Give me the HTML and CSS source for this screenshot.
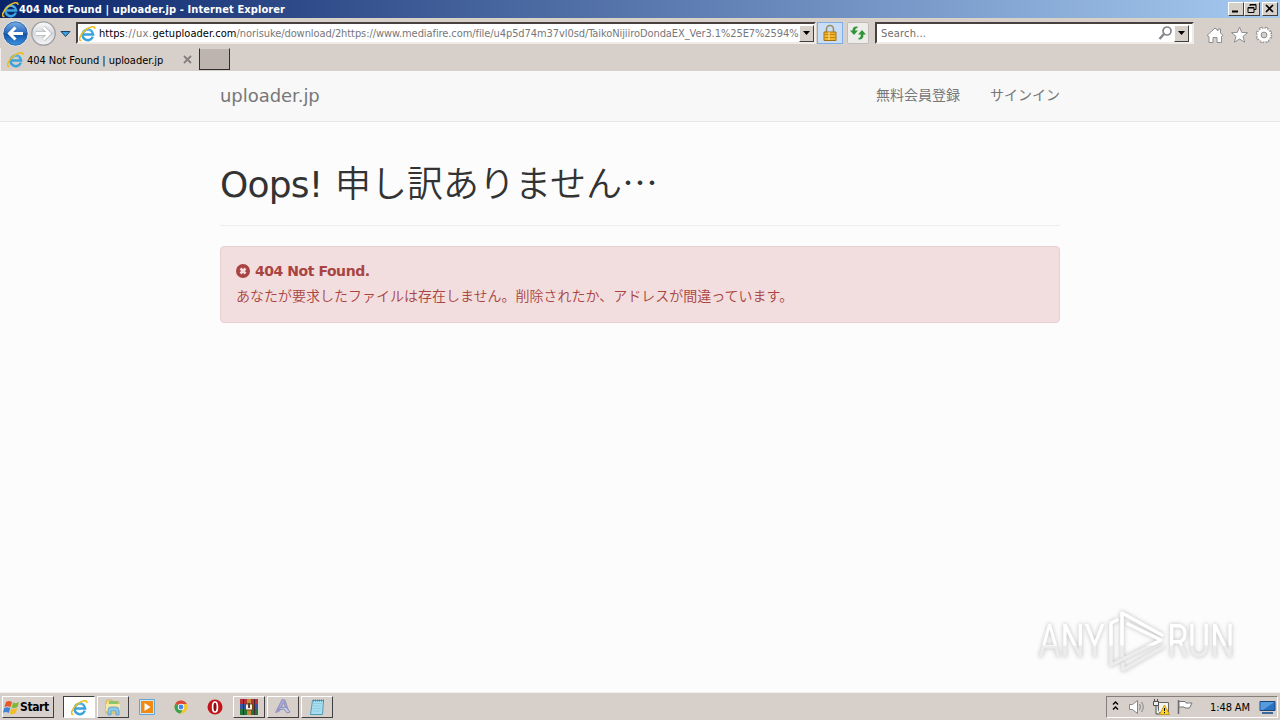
FILE: index.html
```
<!DOCTYPE html>
<html lang="ja">
<head>
  <meta charset="UTF-8">
  <title>404 Not Found | uploader.jp</title>
  <link rel="stylesheet" href="styles.css">
</head>
<body>
  <!-- Shared icons -->
  <svg class="defs" width="0" height="0">
    <defs>
      <linearGradient id="blue" x1="0" y1="0" x2="0" y2="1">
        <stop offset="0" stop-color="#7db4e8"/>
        <stop offset=".48" stop-color="#2a68bd"/>
        <stop offset=".52" stop-color="#1450a5"/>
        <stop offset="1" stop-color="#3d9be6"/>
      </linearGradient>
      <linearGradient id="silver" x1="0" y1="0" x2="0" y2="1">
        <stop offset="0" stop-color="#fafafa"/>
        <stop offset=".5" stop-color="#d6d8dc"/>
        <stop offset="1" stop-color="#f4f6f8"/>
      </linearGradient>
      <linearGradient id="mark" gradientUnits="userSpaceOnUse" x1="0" y1="0" x2="0" y2="76">
        <stop offset=".51" stop-color="#ffffff"/>
        <stop offset=".53" stop-color="#ececec"/>
      </linearGradient>
    </defs>
    <symbol id="ie" viewBox="0 0 16 16">
      <path d="M13 11A5 5 0 1 1 13.300 8.900H4.500" fill="none" stroke="#3aa3de" stroke-width="2.300"/>
      <path d="M4.500 6.200q3.500-3.400 7 0" fill="none" stroke="#8ed0f2" stroke-width=".8"/>
      <path d="M2.300 14.500C-1.200 15.200.800 9.200 6 4.900 10.300 1.300 15.300.300 14.900 3.600" fill="none" stroke="#e9bd22" stroke-width="1.500"/>
    </symbol>
  </svg>

  <!-- Title bar -->
  <div class="titlebar">
    <svg class="title-icon" width="17" height="17"><use href="#ie"/></svg>
    <span class="title">404 Not Found | uploader.jp - Internet Explorer</span>
    <div class="window-buttons">
      <div class="win-btn"><svg width="14" height="11"><path d="M3 8.500h6" stroke="#000" stroke-width="2"/></svg></div>
      <div class="win-btn"><svg width="14" height="11"><path d="M5 3V1.500h6v5H9M5 2h6M3 4.500h6v5H3zM3 5h6" fill="none" stroke="#000"/></svg></div>
      <div class="win-btn close"><svg width="14" height="11"><path d="M3 2l7 7M10 2L3 9" stroke="#000" stroke-width="1.700"/></svg></div>
    </div>
  </div>

  <!-- Address bar -->
  <div class="toolbar">
    <svg class="nav" width="76" height="29">
      <circle cx="43.500" cy="14.500" r="11.700" fill="url(#silver)" stroke="#9c9ea2" stroke-width="1.300"/>
      <circle cx="15.500" cy="14.500" r="12.500" fill="url(#blue)" stroke="#eef3f8" stroke-width="1"/>
      <circle cx="15.500" cy="14.500" r="11.700" fill="none" stroke="#2b5d9c" stroke-width=".8"/>
      <path d="M23 14.500H10M15.500 8.500L9.500 14.500l6 6" fill="none" stroke="#fff" stroke-width="3"/>
      <path d="M36 14.500h13M43.500 8.500l6 6-6 6" fill="none" stroke="#a7a9ad" stroke-width="4"/>
      <path d="M36 14.500h13M43.500 8.500l6 6-6 6" fill="none" stroke="#fff" stroke-width="2.800"/>
      <path d="M61 12.500h9l-4.500 5z" fill="#3d9fe0" stroke="#17446f"/>
    </svg>
    <div class="field address">
      <svg class="field-icon" width="17" height="17"><use href="#ie"/></svg>
      <div class="url"><b>https</b><span class="scheme">://ux.</span><b class="host">getuploader.com</b><span class="path">/norisuke/download/2https://www.mediafire.com/file/u4p5d74m37vl0sd/TaikoNijiiroDondaEX_Ver3.1%25E7%2594%</span></div>
      <div class="drop"><svg width="7" height="4"><path d="M0 0h7L3.500 4z"/></svg></div>
    </div>
    <div class="tool lock">
      <svg width="16" height="18">
        <path d="M4.500 9V5a3.500 3.500 0 0 1 7 0v4" fill="none" stroke="#9a8c62" stroke-width="1.600"/>
        <path d="M2 8h12v8.500H2z" fill="#f2b62c" stroke="#a4700e"/>
        <path d="M2.500 10.500h11M2.500 13.500h11" stroke="#c88411"/>
        <path d="M7 8v8" stroke="#ffe48a"/>
      </svg>
    </div>
    <div class="tool refresh">
      <svg width="18" height="18" fill="#2f9638">
        <path d="M8.500 2.500Q3.500 2 3.500 6.500H1L5 11l4-4.500H6.200Q6 4 8.500 4z"/>
        <path d="M9.500 15.500q5 .5 5-5H17L13 6 9 10.500h2.800q.2 3.300-2.300 3.500z"/>
      </svg>
    </div>
    <div class="field search">
      <span class="placeholder">Search...</span>
      <svg width="15" height="16" fill="none" stroke="#85858b"><circle cx="9" cy="6" r="4" stroke-width="1.700"/><path d="M6 9L1.500 14" stroke-width="2.400"/></svg>
      <div class="drop"><svg width="7" height="4"><path d="M0 0h7L3.500 4z"/></svg></div>
    </div>
    <svg class="commands" width="70" height="20" fill="#fff" stroke="#8e8e8e">
      <path d="M1 10.500L9 3l3 2.800V4h2.500v4L17 10.500l-1.500 1V17.500h-4.500v-5H7v5H3v-6z"/>
      <path d="M33.500 2l2.200 5.400 5.800.3-4.500 3.700 1.600 5.800-5.100-3.200-5.100 3.200 1.600-5.800-4.500-3.700 5.800-.3z"/>
      <circle cx="58" cy="10" r="6.500" stroke-width="3.600" stroke-dasharray="3.100 2.005"/>
      <circle cx="58" cy="10" r="5.600" stroke-width="1.600"/>
      <circle cx="58" cy="10" r="6.500" stroke="#fff" stroke-width="2" stroke-dasharray="1.500 3.605" stroke-dashoffset="-.8"/>
      <circle cx="58" cy="10" r="4.500" stroke="#fff" stroke-width="2"/>
      <circle cx="58" cy="10" r="2.900" fill="#d5cfca"/>
    </svg>
  </div>

  <!-- Tabs -->
  <div class="tabs">
    <div class="tab">
      <svg width="17" height="17"><use href="#ie"/></svg>
      <span class="tab-title">404 Not Found | uploader.jp</span>
      <svg class="tab-close" width="9" height="9"><path d="M1 1l7 7M8 1L1 8" stroke="#85807c" stroke-width="1.800"/></svg>
    </div>
    <div class="new-tab"></div>
  </div>

  <!-- Page -->
  <div class="page">
    <div class="navbar">
      <div class="container nav-inner">
        <a class="brand">uploader.jp</a>
        <div class="nav-links">
          <a>無料会員登録</a>
          <a>サインイン</a>
        </div>
      </div>
    </div>
    <div class="container">
      <h1><span class="oops">Oops! </span>申し訳ありません…</h1>
      <div class="alert">
        <div class="alert-title">
          <svg width="14" height="14"><circle cx="7" cy="7" r="7" fill="#a94442"/><path d="M4.500 4.500l5 5M9.500 4.500l-5 5" stroke="#f2dede" stroke-width="2.600"/></svg>
          <strong>404 Not Found.</strong>
        </div>
        <p>あなたが要求したファイルは存在しません。削除されたか、アドレスが間違っています。</p>
      </div>
    </div>
    <svg class="watermark" width="240" height="76" fill="url(#mark)">
      <g transform="scale(.74 1)" font-size="46">
        <text x="10" y="51">ANY</text>
        <text x="184" y="51">RUN</text>
      </g>
      <g fill="none" stroke="url(#mark)" stroke-width="3.600" stroke-linejoin="round" stroke-linecap="round">
        <path d="M91 50V7l40 22"/>
        <path d="M86 14l-6 3v42l50-25-33-16"/>
        <path d="M92 58v6l40-23"/>
      </g>
    </svg>
  </div>

  <!-- Taskbar -->
  <div class="taskbar">
    <div class="start">
      <svg width="17" height="17">
        <path d="M3 3q3-2 6 0L7.500 8q-3-1.500-6 0z" fill="#e8562a"/>
        <path d="M10 3.500q3 1.500 6-.5L14.500 8q-3 2-6 .5z" fill="#7db83a"/>
        <path d="M1.300 9q3-1.500 6 0L5.800 14q-3-2-6 0z" fill="#3f85d4"/>
        <path d="M8.200 9.500q3 1.500 6-.5L12.700 14q-3 2-6 .5z" fill="#f4bd26"/>
      </svg>
      <span>Start</span>
    </div>
    <div class="tasks">
      <div class="task active"><svg width="17" height="17"><use href="#ie"/></svg></div>
      <div class="task raised">
        <svg width="18" height="18">
          <path d="M2 4l1-2h5l1 2h6v11H2z" fill="#f3dc87" stroke="#cda94a" stroke-width=".8"/>
          <path d="M5 3h9v5H5z" fill="#8cc66c"/>
          <path d="M2 6h14v7H2z" fill="#f8e8a8"/>
          <path d="M4 17v-5q0-3 3-3h5q3 0 3 3v5h-3v-4H7v4z" fill="#8cc8e8" stroke="#5797be" stroke-width=".7"/>
        </svg>
      </div>
      <div class="task">
        <svg width="18" height="18">
          <path d="M1.500 1.500h15v15h-15z" fill="#cfe7f6" stroke="#5fa6d4"/>
          <path d="M3 3h12v12H3z" fill="#f08a13"/>
          <path d="M6.500 5v8l6-4z" fill="#fff"/>
        </svg>
      </div>
      <div class="task">
        <svg width="18" height="18">
          <circle cx="9" cy="9" r="6.500" fill="#f5c62c"/>
          <path d="M9 9L3.400 5.700A6.500 6.500 0 0 1 14.800 6H9z" fill="#df4536"/>
          <path d="M3.400 5.700A6.500 6.500 0 0 0 8.500 15.500L11 11 9 9z" fill="#39a153"/>
          <circle cx="9" cy="9" r="3.200" fill="#fff"/>
          <circle cx="9" cy="9" r="2.400" fill="#4384e8"/>
        </svg>
      </div>
      <div class="task">
        <svg width="18" height="18"><circle cx="9" cy="9" r="7.500" fill="#c3151c"/><ellipse cx="9" cy="9" rx="2.400" ry="5" fill="#8f0d12" stroke="#fff" stroke-width="1.700"/></svg>
      </div>
      <div class="task raised">
        <svg width="18" height="18">
          <path d="M0 1h18v5H0z" fill="#b5323a"/>
          <path d="M0 6h18v5H0z" fill="#3756a4"/>
          <path d="M0 11h18v6H0z" fill="#24743a"/>
          <path d="M3.500 1v16M14.500 1v16" stroke="#462833"/>
          <path d="M7 1h4v16H7z" fill="#c88a30"/>
          <path d="M5.500 6h7v6h-7z" fill="#f4eee2" stroke="#6d4821"/>
          <path d="M9 5v5" stroke="#584034" stroke-width="2"/>
        </svg>
      </div>
      <div class="task raised">
        <svg width="18" height="18">
          <path d="M8 1.500l3 .5 4 12-3-1.500-2-8-5 9-3.500 1z" fill="#a7a5d3" stroke="#8886b0" stroke-width=".7"/>
          <path d="M5 10l7-1 4 5-3 1-3-4-6 1z" fill="#c5cbe9" stroke="#7679b2" stroke-width=".7"/>
        </svg>
      </div>
      <div class="task raised">
        <svg width="18" height="18">
          <path d="M4.500 2.500h11l-1 14H2.500z" fill="#a8def0" stroke="#529bb7"/>
          <path d="M5 5.500h9M5 8h8.500M4.500 10.500H13M4.500 13h8" stroke="#8cc8dc" stroke-width=".8"/>
          <path d="M5 2.500h11" stroke="#657b86" stroke-width="2" stroke-dasharray="1 1"/>
        </svg>
      </div>
    </div>
    <div class="tray">
      <svg width="84" height="18" fill="none">
        <path d="M4 6.500L6.500 4 9 6.500M4 11.500L6.500 9 9 11.500" stroke="#000" stroke-width="1.400"/>
        <path d="M20.500 6.500h3l5-4v13l-5-4h-3z" fill="#fff" stroke="#85858a"/>
        <path d="M30.500 6q2 3 0 6M32.500 4q3.500 5 0 10" stroke="#85858a"/>
        <path d="M49.500 4.500h10v10h-10z" fill="#f4f4ef" stroke="#67676a"/>
        <path d="M44.500 3.500h5v4h-5zM45.500 1v3M48.500 1v3M47 8v8h4" fill="#eee" stroke="#4e4e50"/>
        <path d="M55.500 7l5 9.500h-10z" fill="#ffd52a" stroke="#b68b12" stroke-width=".8"/>
        <path d="M55.500 10v3M55.500 14v1.200" stroke="#000"/>
        <path d="M69.500 2v14" stroke="#69696b" stroke-width="1.500"/>
        <path d="M70 3.500h6l1 1.500h6l-2.500 5H76L75 9h-5z" fill="#fff" stroke="#77777a"/>
      </svg>
      <span class="clock">1:48 AM</span>
      <svg class="desktop" width="17" height="15"><path d="M1 1.500h15v9H1z" fill="#2d6fc0" stroke="#17467f"/><path d="M1.500 2h14L4 10H1.500z" fill="#559bdd"/><path d="M3 13h11" stroke="#3a699b" stroke-width="2"/></svg>
    </div>
  </div>
</body>
</html>
```
FILE: styles.css
```
* {
  box-sizing: border-box;
}

body {
  margin: 0;
  width: 1280px;
  height: 720px;
  overflow: hidden;
  display: flex;
  flex-direction: column;
  background: #d6cfca;
  font-family: "DejaVu Sans Condensed", "DejaVu Sans", sans-serif;
  font-size: 11px;
  color: #000;
}

svg {
  display: block;
  flex-shrink: 0;
}

.defs {
  position: absolute;
}

/* Title bar */
.titlebar {
  height: 18px;
  display: flex;
  align-items: center;
  padding: 0 2px;
  background: linear-gradient(to right, #0a246a, #a6caf0);
  color: #fff;
  font-weight: bold;
}

.title {
  white-space: nowrap;
  letter-spacing: 0.1px;
}

.window-buttons {
  display: flex;
  margin-left: auto;
}

.win-btn,
.drop {
  background: #d6d0c8;
  border: 1px solid;
  border-color: #fff #404040 #404040 #fff;
}

.win-btn {
  width: 16px;
  height: 14px;
}

.win-btn.close {
  margin-left: 2px;
}

/* Address bar */
.toolbar {
  height: 30px;
  display: flex;
  align-items: flex-start;
  border-top: 1px solid #d8d3c4;
}

.field {
  height: 22px;
  margin-top: 3px;
  display: flex;
  align-items: center;
  background: #fff;
  border: 2px solid;
  border-color: #494140 #f0ebe7 #f0ebe7 #494140;
}

.address {
  width: 740px;
  padding-left: 1px;
}

.url {
  flex: 1;
  margin-left: 3px;
  padding-top: 1px;
  white-space: nowrap;
  color: #77777a;
}

.url b {
  font-weight: normal;
  color: #000;
  letter-spacing: 0.05px;
}

.url .scheme {
  letter-spacing: 0.4px;
}

.url .path {
  letter-spacing: -0.08px;
}

.drop {
  width: 15px;
  height: 17px;
  display: flex;
  align-items: center;
  justify-content: center;
}

.tool {
  margin-top: 3px;
  height: 22px;
  display: flex;
  align-items: center;
  justify-content: center;
  border: 1px solid;
}

.lock {
  width: 26px;
  margin-left: 1px;
  background: #c9def5;
  border-color: #7eaee5;
}

.refresh {
  width: 22px;
  margin-left: 4px;
  background: #eeecea;
  border-color: #c0bcb8;
  border-radius: 2px;
}

.search {
  width: 319px;
  margin-left: 6px;
  padding: 0 3px 0 4px;
}

.placeholder {
  flex: 1;
  padding-top: 1px;
  color: #6d6d6d;
  letter-spacing: 0.2px;
}

.search .drop {
  margin-left: 1px;
}

.commands {
  margin: 6px 0 0 12px;
}

/* Tabs */
.tabs {
  height: 23px;
  display: flex;
}

.tab {
  width: 199px;
  display: flex;
  align-items: center;
  padding-left: 6px;
  border-left: 1px solid #f3efec;
}

.tab-title {
  margin: 1px 0 0 3px;
  letter-spacing: -0.04px;
}

.tab-close {
  margin: 0 7px 0 auto;
}

.new-tab {
  width: 31px;
  height: 22px;
  background: #bdb4b0;
  border: 1px solid;
  border-color: #d6cfca #302d2c #302d2c #302d2c;
}

/* Page */
.page {
  position: relative;
  height: 621px;
  background: #fcfcfc;
  color: #333;
  font-family: "DejaVu Sans", "Noto Sans CJK JP", sans-serif;
  font-size: 14px;
}

.navbar {
  height: 51px;
  background: #f8f8f8;
  border-bottom: 1px solid #e7e7e7;
  color: #777;
}

.container {
  width: 840px;
  margin: 0 auto;
}

.nav-inner,
.nav-links {
  display: flex;
  align-items: center;
}

.nav-inner {
  height: 48px;
  justify-content: space-between;
}

.brand {
  padding-top: 1px;
  font-size: 18px;
  letter-spacing: -0.05px;
}

.nav-links {
  gap: 30px;
  padding-bottom: 3px;
  font-family: "Noto Sans CJK JP", sans-serif;
}

h1 {
  height: 66px;
  margin: 38px 0 20px;
  border-bottom: 1px solid #eee;
  font-family: "Noto Sans CJK JP", sans-serif;
  font-size: 36px;
  font-weight: 350;
  line-height: 43px;
  white-space: nowrap;
}

.oops {
  margin-right: 2px;
  font-family: "DejaVu Sans", sans-serif;
  font-weight: normal;
  letter-spacing: -0.8px;
}

.alert {
  height: 77px;
  padding: 12px 15px;
  background: #f2dede;
  border: 1px solid #e8cfd4;
  border-radius: 4px;
  color: #a94442;
}

.alert-title {
  height: 23px;
  display: flex;
  align-items: center;
  gap: 5px;
}

.alert-title strong {
  letter-spacing: -0.45px;
}

.alert p {
  margin: 0;
  line-height: 26px;
  font-family: "Noto Sans CJK JP", sans-serif;
  font-weight: 350;
}

.watermark {
  position: absolute;
  left: 1031px;
  top: 535px;
  font-family: "Roboto", sans-serif;
  font-weight: 400;
  filter: drop-shadow(0 0 2px #bbb);
}

/* Taskbar */
.taskbar {
  height: 28px;
  display: flex;
  align-items: center;
  padding: 1px 2px 0;
  border-top: 1px solid #f1eeeb;
}

.start,
.raised {
  border: 1px solid;
  border-color: #fff #404040 #404040 #fff;
}

.start {
  width: 52px;
  height: 22px;
  display: flex;
  align-items: center;
  font-weight: bold;
  font-size: 12px;
  letter-spacing: -0.4px;
}

.tasks {
  display: flex;
  gap: 2px;
  margin-left: 9px;
}

.task {
  width: 32px;
  height: 22px;
  display: flex;
  align-items: center;
  justify-content: center;
}

.active {
  background: #fff;
  border: 1px solid;
  border-color: #404040 #fff #fff #404040;
}

.tray {
  width: 172px;
  height: 22px;
  margin-left: auto;
  display: flex;
  align-items: center;
  padding-left: 2px;
  border: 1px solid;
  border-color: #85807c #fff #fff #85807c;
}

.clock {
  margin-left: 17px;
  white-space: nowrap;
  letter-spacing: -0.1px;
}

.desktop {
  margin: 0 1px 0 auto;
}
```
